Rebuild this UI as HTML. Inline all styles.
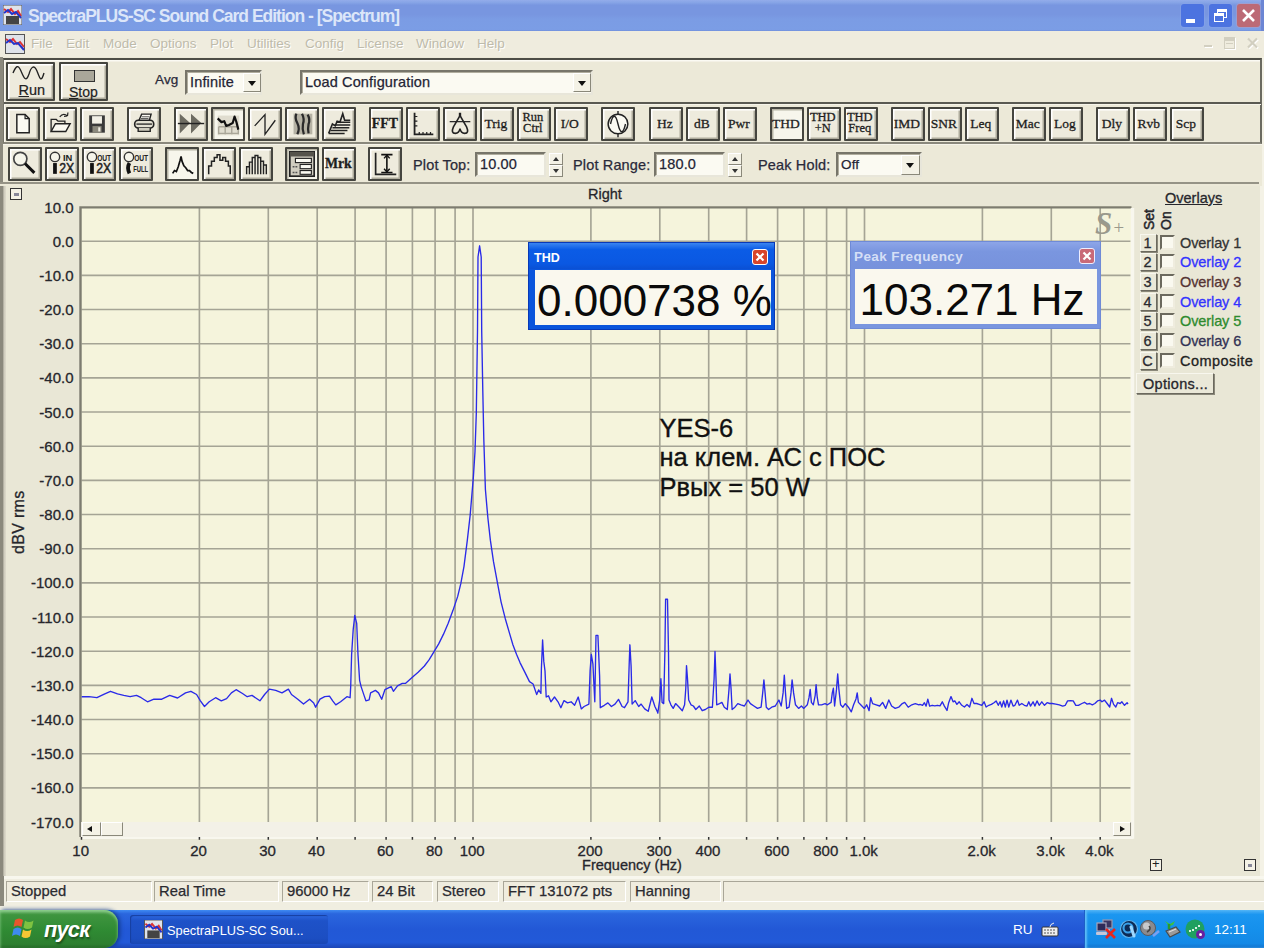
<!DOCTYPE html><html><head><meta charset="utf-8"><title>SpectraPLUS-SC Sound Card Edition - [Spectrum]</title><style>
*{box-sizing:border-box;margin:0;padding:0}
html,body{width:1264px;height:948px;overflow:hidden;background:#ECE9D8}
body{position:relative;font-family:"Liberation Sans",sans-serif;color:#222;font-size:14px}
.abs{position:absolute}
.t{position:absolute;white-space:nowrap;line-height:1}
#title{left:0;top:0;width:1264px;height:31.5px;background:linear-gradient(#93ACEA 0,#86A4E6 8%,#7896E0 16%,#7896E0 45%,#7B9CE4 60%,#7B9DE5 92%,#6C88D8 100%)}
#title .tt{left:28px;top:7.5px;font-size:17.5px;font-weight:bold;color:#DCE6F9;letter-spacing:-1px;font-family:"Liberation Sans",sans-serif}
#menu{left:0;top:31px;width:1264px;height:26px;background:#EFECDE}
#menu .t{top:6px;font-size:13.5px;color:#BEBBAB;text-shadow:1px 1px 0 #fff}
.btn{position:absolute;width:34px;height:34px;background:#EEEBDD;border:2px solid #45453f;border-radius:1px;box-shadow:inset 1.5px 1.5px 0 #fff,inset -1.5px -1.5px 0 #aeab9c}
.btn.down{background:#F7F6EC;box-shadow:inset 1.5px 1.5px 0 #b8b5a6}
.btn svg{position:absolute;left:0;top:0;width:30px;height:30px}
.btxt{position:absolute;left:-2.7px;top:0;width:34px;height:30px;text-align:center;font-family:"Liberation Serif",serif;font-weight:bold;color:#1e1e1e;-webkit-text-stroke:0.3px #1e1e1e;white-space:nowrap}
.inp{position:absolute;background:#FBFAF2;border:2px solid;border-color:#77756a #e8e6da #e8e6da #77756a;box-shadow:inset 1px 1px 0 #b0ad9e}
.lab{position:absolute;white-space:nowrap;line-height:1;font-size:14.5px;color:#2a2a3a;-webkit-text-stroke:0.25px #2a2a3a;letter-spacing:0.15px}
.sp{position:absolute;background:#F4F2E6;border:1px solid;border-color:#fff #8a887a #8a887a #fff}
.st{position:absolute;top:881px;height:21px;border:1px solid;border-color:#a9a698 #fff #fff #a9a698;font-size:14.8px;line-height:19px;padding-left:4px;color:#2a2a30;-webkit-text-stroke:0.25px #2a2a30;white-space:nowrap;background:#EFECDE}
.ov{position:absolute;left:1180px;font-size:14.5px;line-height:1;white-space:nowrap;-webkit-text-stroke:0.3px}
.ovb{position:absolute;left:1140px;width:17px;height:18px;border:1px solid;border-color:#f8f7ee #6b695e #6b695e #f8f7ee;box-shadow:1px 1px 0 #8a887a;font-size:14.5px;line-height:16px;text-align:center;padding-right:2px;background:#EAE8D8;color:#2a2a30;-webkit-text-stroke:0.3px}
.ovc{position:absolute;left:1160px;width:15px;height:15px;background:#FAF9F0;border:2px solid;border-color:#6b695e #efecde #efecde #6b695e}
.ax{position:absolute;font-size:14.5px;line-height:1;white-space:nowrap;color:#26262c;-webkit-text-stroke:0.3px #26262c}
.pw{position:absolute}
</style></head><body>
<div id="title" class="abs">
<svg class="abs" style="left:3px;top:5px" width="19" height="20" viewBox="0 0 19 20"><rect x="0" y="0" width="19" height="20" fill="#dfe3ea" stroke="#555" stroke-width="1"/><path d="M1 4 L5 7 L8 4 L12 9 L15 6 L18 11" stroke="#d33" stroke-width="2" fill="none"/><path d="M1 8 L5 5 L9 9 L13 7 L18 13" stroke="#23c" stroke-width="2" fill="none"/><rect x="3" y="11" width="13" height="8" fill="#444"/></svg>
<div class="t tt">SpectraPLUS-SC Sound Card Edition - [Spectrum]</div>
<div class="abs" style="left:1180.5px;top:3.5px;width:23.5px;height:23.5px;border-radius:3px;box-shadow:0 0 0 1px #8FA8EE55;background:#4C73E0"></div>
<div class="abs" style="left:1208.7px;top:3.5px;width:23.5px;height:23.5px;border-radius:3px;box-shadow:0 0 0 1px #8FA8EE55;background:#4C73E0"></div>
<div class="abs" style="left:1236.8px;top:3.5px;width:23.5px;height:23.5px;border-radius:3px;box-shadow:0 0 0 1px #D9A0AC55;background:#BC6A76"></div>
<div class="abs" style="left:1186px;top:19px;width:9px;height:3.5px;background:#fff"></div>
<div class="abs" style="left:1217px;top:9px;width:10px;height:9px;border:1.5px solid #fff;border-top-width:3px"></div>
<div class="abs" style="left:1213.500px;top:13px;width:10px;height:9px;border:1.5px solid #fff;border-top-width:3px;background:#4C73E0"></div>
<svg class="abs" style="left:1241px;top:8px" width="15" height="15"><path d="M2 2 L13 13 M13 2 L2 13" stroke="#fff" stroke-width="2.600"/></svg>
<div class="abs" style="left:1261px;top:0;width:3px;height:31px;background:#6C86D4"></div>
</div>
<div id="menu" class="abs">
<svg class="abs" style="left:5px;top:3px" width="20" height="20" viewBox="0 0 20 20"><rect x="0.5" y="0.5" width="19" height="19" fill="#dfe3ea" stroke="#555"/><path d="M1 5 L5 8 L8 5 L12 10 L15 8 L19 13" stroke="#d33" stroke-width="2" fill="none"/><path d="M1 9 L5 6 L9 10 L13 9 L19 16" stroke="#23c" stroke-width="2" fill="none"/></svg>
<div class="t" style="left:31px">File</div>
<div class="t" style="left:66px">Edit</div>
<div class="t" style="left:103px">Mode</div>
<div class="t" style="left:150px">Options</div>
<div class="t" style="left:210px">Plot</div>
<div class="t" style="left:247px">Utilities</div>
<div class="t" style="left:305px">Config</div>
<div class="t" style="left:357px">License</div>
<div class="t" style="left:416px">Window</div>
<div class="t" style="left:477px">Help</div>
<div class="abs" style="left:1204px;top:13.500px;width:8px;height:2.500px;background:#D2CFC0;box-shadow:1px 1px 0 #fff"></div>
<div class="abs" style="left:1224px;top:6px;width:11px;height:11.500px;border:1.500px solid #D2CFC0;border-top-width:4px;box-shadow:1px 1px 0 #fff"></div><div class="abs" style="left:1226px;top:11.500px;width:7px;height:1.500px;background:#D2CFC0"></div>
<svg class="abs" style="left:1246px;top:5px" width="14" height="14"><path d="M3 3.500 L12 12.500 M12 3.500 L3 12.500" stroke="#fff" stroke-width="2.200"/><path d="M2 2.500 L11 11.500 M11 2.500 L2 11.500" stroke="#D2CFC0" stroke-width="2.200"/></svg>
</div>
<div class="abs" style="left:3px;top:58px;width:1259px;height:86px;border-style:solid;border-color:#4d4d46 #6b6a60 #8a887c #77756a;border-width:2.5px 2px 2px 1.5px;box-shadow:inset 1px 1.5px 0 #fbfaf3,0 1px 0 #f6f4ea"></div>
<div class="abs" style="left:4px;top:102.300px;width:1257px;height:1.600px;background:#5a5a52;box-shadow:0 1px 0 #f6f4ea"></div>
<div class="abs" style="left:0;top:57px;width:3px;height:126px;background:#8b897d"></div>
<div class="abs" style="left:0;top:182px;width:1259px;height:2.3px;background:#959386"></div>
<div class="abs" style="left:0;top:186px;width:6px;height:690px;background:linear-gradient(90deg,#8b897d 0,#8b897d 55%,#c9c6b8 60%,#dedbcc 100%)"></div>
<div class="btn" style="left:6px;top:62px;width:49px;height:39px"><svg style="width:45px;height:35px" viewBox="0 0 45 35"><path d="M5 9 C8 2 10 0 13 7 C16 14 18 19 21 10 C23 3 26 0 29 7 C32 15 33 19 36 9" stroke="#222" stroke-width="1.35" fill="none"/></svg><div class="t" style="left:10.5px;top:19px;font-size:14.5px;color:#222;-webkit-text-stroke:0.2px"><u>R</u>un</div></div>
<div class="btn" style="left:59px;top:62px;width:49px;height:39px"><div class="abs" style="left:13px;top:6px;width:21px;height:12px;background:#aaa79a;border:1.5px solid #333"></div><div class="t" style="left:8px;top:21px;font-size:14px;color:#222;-webkit-text-stroke:0.2px"><u>S</u>top</div></div>
<div class="lab" style="left:155px;top:73px;font-size:13.5px">Avg</div>
<div class="inp" style="left:185px;top:69.5px;width:77px;height:25px"></div><div class="lab" style="left:190px;top:75px;color:#223">Infinite</div>
<div class="sp" style="left:243px;top:73px;width:18px;height:19px"></div><div class="abs" style="left:248px;top:81px;border:4px solid transparent;border-top:5px solid #111"></div>
<div class="inp" style="left:300px;top:69.5px;width:293px;height:25px"></div><div class="lab" style="left:305px;top:75px;color:#223">Load Configuration</div>
<div class="sp" style="left:573px;top:73px;width:18px;height:19px"></div><div class="abs" style="left:578px;top:81px;border:4px solid transparent;border-top:5px solid #111"></div>
<div class="btn" style="left:5.5px;top:106.5px;width:34px;height:34px"><svg viewBox="0 0 32 32"><g transform="translate(1.5 1.5) scale(0.88)"><path d="M9 5 H19 L24 10 V27 H9 Z" fill="#fbfaf2" stroke="#222" stroke-width="1.8"/><path d="M19 5 V10 H24" stroke="#222" fill="none" stroke-width="1.5"/></g></svg></div>
<div class="btn" style="left:42.5px;top:106.5px;width:34px;height:34px"><svg viewBox="0 0 32 32"><g transform="translate(1 1) scale(0.92)"><path d="M6 25 V11 H12 L14 13 H22 V16" stroke="#222" fill="none" stroke-width="1.5"/><path d="M6 25 L11 16 H28 L23 25 Z" fill="#fbfaf2" stroke="#222" stroke-width="1.7"/><path d="M16 8 Q20 3 25 7 M25 7 l0.5 -4 M25 7 l-4 0.5" stroke="#222" fill="none" stroke-width="1.4"/></g></svg></div>
<div class="btn" style="left:79.5px;top:106.5px;width:34px;height:34px"><svg viewBox="0 0 32 32"><g transform="translate(1.5 1.5) scale(0.88)"><rect x="7" y="6" width="19" height="21" fill="#3a3a3a"/><rect x="10.500" y="7" width="12" height="9" fill="#f2f0e6"/><rect x="11" y="19" width="11" height="8" fill="#8a887c"/><rect x="18" y="20.500" width="2.500" height="5" fill="#f2f0e6"/></g></svg></div>
<div class="btn" style="left:126.5px;top:106.5px;width:34px;height:34px"><svg viewBox="0 0 32 32"><g transform="translate(1.5 0) scale(0.92)"><path d="M10 13 L13 6 H24 L22 13" fill="#fbfaf2" stroke="#222" stroke-width="1.6"/><path d="M13 9 h9 M12 11 h9" stroke="#444" stroke-width="1"/><rect x="5" y="13" width="22" height="9" rx="4" fill="#e4e1d3" stroke="#222" stroke-width="1.9"/><path d="M7 17.500 H25" stroke="#222" stroke-width="1.5"/><path d="M9 22 V26 H23 V22" fill="#cfccbe" stroke="#222" stroke-width="1.6"/></g></svg></div>
<div class="btn" style="left:173.5px;top:106.5px;width:34px;height:34px"><svg viewBox="0 0 32 32"><path d="M4 5 L15 15 L4 26 Z M16 5 L27 15 L16 26 Z" fill="#6e6c62"/><path d="M2 15.500 H30" stroke="#222" stroke-width="1.5"/></svg></div>
<div class="btn down" style="left:210.5px;top:106.5px;width:34px;height:34px"><svg viewBox="0 0 32 32"><rect x="5" y="7" width="23" height="21" fill="#e0ddcf"/><path d="M6 19 H27 M6 26 H27 M6 19 V27 M13 19 V27 M20 19 V27 M27 19 V27" stroke="#a9a698" stroke-width="1.5" fill="none"/><path d="M5 10 L9 14 L12 13 L14 18 L17 17 L21 15 L23 8 L25 14 L27 22" stroke="#111" stroke-width="2.3" fill="none" stroke-linejoin="round"/></svg></div>
<div class="btn" style="left:247.5px;top:106.5px;width:34px;height:34px"><svg viewBox="0 0 32 32"><path d="M5 18 L16 6 V27 L27 12" stroke="#222" fill="none" stroke-width="1.4"/></svg></div>
<div class="btn" style="left:284.5px;top:106.5px;width:34px;height:34px"><svg viewBox="0 0 32 32"><rect x="7" y="5" width="20" height="22" fill="#b5b2a4"/><path d="M10 5 q-2 5 1 10 q3 6 0 12 M16 5 q3 6 1 11 q-1 6 1 11 M22 6 q3 5 1 10 q-1 5 0 10" stroke="#2a2a2a" stroke-width="2.4" fill="none"/></svg></div>
<div class="btn" style="left:321.5px;top:106.5px;width:34px;height:34px"><svg viewBox="0 0 32 32"><path d="M5 26 H22 M7 23 H25 M9 20 H27 M11 17 H28 M13 14 H28" stroke="#222" stroke-width="1.600"/><path d="M5 26 L9 16 L12 18 L14 13 L17 14 L20 5 L22 12 L28 12" stroke="#222" stroke-width="1.7" fill="none"/></svg></div>
<div class="btn" style="left:368.5px;top:106.5px;width:34px;height:34px"><div class="btxt" style="font-size:13.8px;line-height:30px;font-weight:bold">FFT</div></div>
<div class="btn" style="left:405.5px;top:106.5px;width:34px;height:34px"><svg viewBox="0 0 32 32"><path d="M7 4 V27 H27" stroke="#222" fill="none" stroke-width="1.900"/><path d="M7 8 h3 M7 13 h3 M7 18 h3 M12 27 v-2.500 M16 27 v-2.500 M20 27 v-2.500 M24 27 v-2.500" stroke="#222" stroke-width="1.3"/></svg></div>
<div class="btn" style="left:442.5px;top:106.5px;width:34px;height:34px"><svg viewBox="0 0 32 32"><path d="M5 13.500 H27" stroke="#222" stroke-width="1.3"/><path d="M16 4 L16 8" stroke="#222" stroke-width="2.500"/><path d="M16 7 L9 19 Q6 26 11 26 Q15 26 16 21 Q17 26 21 26 Q26 26 23 19 Z" stroke="#222" fill="none" stroke-width="1.700"/></svg></div>
<div class="btn" style="left:479.5px;top:106.5px;width:34px;height:34px"><div class="btxt" style="font-size:13.5px;line-height:30px;font-weight:normal">Trig</div></div>
<div class="btn" style="left:516.5px;top:106.5px;width:34px;height:34px"><div class="btxt" style="font-size:12.5px;line-height:11.5px;padding-top:3px;font-weight:normal">Run<br>Ctrl</div></div>
<div class="btn" style="left:553.5px;top:106.5px;width:34px;height:34px"><div class="btxt" style="font-size:13.5px;line-height:30px;font-weight:normal">I/O</div></div>
<div class="btn" style="left:600.5px;top:106.5px;width:34px;height:34px"><svg viewBox="0 0 32 32"><circle cx="16" cy="16" r="10.500" fill="#fbfaf2" stroke="#222" stroke-width="1.600"/><path d="M8 16 C10.500 5 13.500 5 16 16 C18.500 27 21.500 27 24 16" stroke="#222" fill="none" stroke-width="1.500"/><path d="M16 2 v4 M16 26 v4" stroke="#222" stroke-width="1.500"/></svg></div>
<div class="btn" style="left:648.5px;top:106.5px;width:34px;height:34px"><div class="btxt" style="font-size:13.5px;line-height:30px;font-weight:normal">Hz</div></div>
<div class="btn" style="left:685.5px;top:106.5px;width:34px;height:34px"><div class="btxt" style="font-size:13.5px;line-height:30px;font-weight:normal">dB</div></div>
<div class="btn" style="left:722.5px;top:106.5px;width:34px;height:34px"><div class="btxt" style="font-size:13.5px;line-height:30px;font-weight:normal">Pwr</div></div>
<div class="btn down" style="left:769.5px;top:106.5px;width:34px;height:34px"><div class="btxt" style="font-size:13.5px;line-height:30px;font-weight:normal">THD</div></div>
<div class="btn" style="left:806.5px;top:106.5px;width:34px;height:34px"><div class="btxt" style="font-size:12.5px;line-height:11.5px;padding-top:3px;font-weight:normal">THD<br>+N</div></div>
<div class="btn" style="left:843.5px;top:106.5px;width:34px;height:34px"><div class="btxt" style="font-size:12.5px;line-height:11.5px;padding-top:3px;font-weight:normal">THD<br>Freq</div></div>
<div class="btn" style="left:890.5px;top:106.5px;width:34px;height:34px"><div class="btxt" style="font-size:13.5px;line-height:30px;font-weight:normal">IMD</div></div>
<div class="btn" style="left:927.5px;top:106.5px;width:34px;height:34px"><div class="btxt" style="font-size:13.5px;line-height:30px;font-weight:normal">SNR</div></div>
<div class="btn" style="left:964.5px;top:106.5px;width:34px;height:34px"><div class="btxt" style="font-size:13.5px;line-height:30px;font-weight:normal">Leq</div></div>
<div class="btn" style="left:1011.5px;top:106.5px;width:34px;height:34px"><div class="btxt" style="font-size:13.5px;line-height:30px;font-weight:normal">Mac</div></div>
<div class="btn" style="left:1048.5px;top:106.5px;width:34px;height:34px"><div class="btxt" style="font-size:13.5px;line-height:30px;font-weight:normal">Log</div></div>
<div class="btn" style="left:1095.5px;top:106.5px;width:34px;height:34px"><div class="btxt" style="font-size:13.5px;line-height:30px;font-weight:normal">Dly</div></div>
<div class="btn" style="left:1132.5px;top:106.5px;width:34px;height:34px"><div class="btxt" style="font-size:13.5px;line-height:30px;font-weight:normal">Rvb</div></div>
<div class="btn" style="left:1169.5px;top:106.5px;width:34px;height:34px"><div class="btxt" style="font-size:13.5px;line-height:30px;font-weight:normal">Scp</div></div>
<div class="btn" style="left:8px;top:147px;width:34px;height:34px"><svg viewBox="0 0 32 32"><g transform="translate(-1 -0.5)"><circle cx="12" cy="11" r="7" fill="#f6f5ea" stroke="#444" stroke-width="1.800"/><path d="M17 16 L27 26" stroke="#111" stroke-width="3.200"/></g></svg></div>
<div class="btn" style="left:45px;top:147px;width:34px;height:34px"><svg viewBox="0 0 32 32"><circle cx="8.500" cy="8.500" r="5" fill="#f6f5ea" stroke="#333" stroke-width="1.500"/><path d="M8.500 15 V26.500" stroke="#111" stroke-width="4"/><text x="17" y="12.500" font-size="9" font-weight="bold" font-family="Liberation Sans, sans-serif" fill="#222" textLength="10" lengthAdjust="spacingAndGlyphs">IN</text><text x="13" y="26" font-size="15" font-weight="normal" font-family="Liberation Sans, sans-serif" fill="#222" stroke="#222" stroke-width="0.5" textLength="16" lengthAdjust="spacingAndGlyphs">2X</text></svg></div>
<div class="btn" style="left:82px;top:147px;width:34px;height:34px"><svg viewBox="0 0 32 32"><circle cx="8.500" cy="8.500" r="5" fill="#f6f5ea" stroke="#333" stroke-width="1.500"/><path d="M8.500 15 V26.500" stroke="#111" stroke-width="4"/><text x="14" y="12.500" font-size="9" font-weight="bold" font-family="Liberation Sans, sans-serif" fill="#222" textLength="15" lengthAdjust="spacingAndGlyphs">OUT</text><text x="13" y="26" font-size="15" font-weight="normal" font-family="Liberation Sans, sans-serif" fill="#222" stroke="#222" stroke-width="0.5" textLength="16" lengthAdjust="spacingAndGlyphs">2X</text></svg></div>
<div class="btn" style="left:119px;top:147px;width:34px;height:34px"><svg viewBox="0 0 32 32"><circle cx="8.500" cy="8.500" r="5" fill="#f6f5ea" stroke="#333" stroke-width="1.500"/><path d="M9 15 Q6 20 9 26" stroke="#111" stroke-width="4" fill="none"/><text x="14" y="12.500" font-size="9" font-weight="bold" font-family="Liberation Sans, sans-serif" fill="#222" textLength="15" lengthAdjust="spacingAndGlyphs">OUT</text><text x="13" y="25" font-size="10" font-weight="bold" font-family="Liberation Sans, sans-serif" fill="#222" stroke="#222" stroke-width="0" textLength="16" lengthAdjust="spacingAndGlyphs">FULL</text></svg></div>
<div class="btn down" style="left:165px;top:147px;width:34px;height:34px"><svg viewBox="0 0 32 32"><path d="M6 26 L8 23 L10 24 L12 19 L14 12 L15 8 L16 13 L18 18 L20 20 L22 23 L24 23 L26 25 L28 26" stroke="#111" stroke-width="1.800" fill="none"/></svg></div>
<div class="btn" style="left:202px;top:147px;width:34px;height:34px"><svg viewBox="0 0 32 32"><path d="M5 27 V18 H8 V13 H11 V9 H14 V6 H17 V12 H20 V9 H23 V13 H26 V18 H28 V27" stroke="#222" fill="none" stroke-width="1.600"/></svg></div>
<div class="btn" style="left:239px;top:147px;width:34px;height:34px"><svg viewBox="0 0 32 32"><path d="M6 27 V19 H9 V27 M9 19 V14 H12 V27 M12 14 V9 H15 V27 M15 9 V7 H18 V27 M18 9 H21 V27 M21 13 H24 V27 M24 17 H27 V27" stroke="#222" fill="none" stroke-width="1.500"/></svg></div>
<div class="btn down" style="left:285px;top:147px;width:34px;height:34px"><svg viewBox="0 0 32 32"><rect x="3" y="3" width="26" height="26" fill="#d0cdc0" stroke="#222" stroke-width="1.800"/><rect x="3" y="3" width="26" height="5" fill="#55534c"/><rect x="9" y="10" width="17" height="4.500" fill="#fbfaf2" stroke="#222" stroke-width="1.200"/><rect x="14" y="16.500" width="12" height="4.500" fill="#fbfaf2" stroke="#222" stroke-width="1.200"/><rect x="14" y="23" width="12" height="4" fill="#fbfaf2" stroke="#222" stroke-width="1.200"/><path d="M6 19 h6 M6 25 h6" stroke="#555" stroke-width="1.500" stroke-dasharray="2 1"/></svg></div>
<div class="btn" style="left:322px;top:147px;width:34px;height:34px"><div class="btxt" style="font-size:13.8px;line-height:30px;font-weight:bold">Mrk</div></div>
<div class="btn" style="left:368px;top:147px;width:34px;height:34px"><svg viewBox="0 0 32 32"><path d="M6 4 V27 H28" stroke="#222" fill="none" stroke-width="1.800"/><path d="M12 6 H24 M12 25 H24 M18 6 V25" stroke="#111" stroke-width="1.700"/><path d="M15 10 L18 6.500 L21 10 M15 21 L18 24.500 L21 21" stroke="#111" stroke-width="1.500" fill="none"/></svg></div>
<div class="lab" style="left:413px;top:158px">Plot Top:</div>
<div class="inp" style="left:475px;top:152px;width:71px;height:25px"></div><div class="lab" style="left:480px;top:157px;color:#223">10.00</div>
<div class="sp" style="left:549px;top:153px;width:14px;height:12px"></div><div class="sp" style="left:549px;top:165px;width:14px;height:12px"></div>
<div class="abs" style="left:553px;top:154px;border:3px solid transparent;border-bottom:4px solid #333"></div><div class="abs" style="left:553px;top:169px;border:3px solid transparent;border-top:4px solid #333"></div>
<div class="lab" style="left:573px;top:158px">Plot Range:</div>
<div class="inp" style="left:654px;top:152px;width:71px;height:25px"></div><div class="lab" style="left:659px;top:157px;color:#223">180.0</div>
<div class="sp" style="left:728px;top:153px;width:14px;height:12px"></div><div class="sp" style="left:728px;top:165px;width:14px;height:12px"></div>
<div class="abs" style="left:732px;top:154px;border:3px solid transparent;border-bottom:4px solid #333"></div><div class="abs" style="left:732px;top:169px;border:3px solid transparent;border-top:4px solid #333"></div>
<div class="lab" style="left:758px;top:158px">Peak Hold:</div>
<div class="inp" style="left:836px;top:152px;width:86px;height:25px"></div><div class="lab" style="left:841px;top:158px;color:#223;font-size:13.5px">Off</div>
<div class="sp" style="left:901px;top:155px;width:19px;height:20px"></div><div class="abs" style="left:906px;top:163px;border:4px solid transparent;border-top:5px solid #111"></div>
<div class="abs" style="left:6px;top:186px;width:1254px;height:690px;background:#E9E7D6"></div>
<div class="abs" style="left:10px;top:188px;width:12px;height:12px;border:1.3px solid #333;background:#f4f2e6"></div><div class="abs" style="left:13.5px;top:192.5px;width:5px;height:3px;background:#889"></div>
<div class="ax" style="left:588px;top:187px">Right</div>
<div class="ax" style="left:1165px;top:191px;text-decoration:underline">Overlays</div>
<div class="abs" style="left:1260px;top:186px;width:4px;height:690px;background:#F4F2E6"></div>
<div class="abs" style="left:1262px;top:57px;width:2px;height:130px;background:#F4F2E6"></div>
<svg class="abs" style="left:0;top:0" width="1264" height="948" viewBox="0 0 1264 948"><rect x="80.5" y="206.0" width="1051.0" height="616.0" fill="#F5F4DC"/><path d="M199.4 207.0 V822.0 M268.3 207.0 V822.0 M317.2 207.0 V822.0 M355.1 207.0 V822.0 M386.1 207.0 V822.0 M412.4 207.0 V822.0 M435.1 207.0 V822.0 M455.1 207.0 V822.0 M473.0 207.0 V822.0 M590.9 207.0 V822.0 M659.8 207.0 V822.0 M708.7 207.0 V822.0 M746.6 207.0 V822.0 M777.6 207.0 V822.0 M803.9 207.0 V822.0 M826.6 207.0 V822.0 M846.6 207.0 V822.0 M864.5 207.0 V822.0 M982.4 207.0 V822.0 M1051.3 207.0 V822.0 M1100.2 207.0 V822.0 M81.5 241.2 H1130.5 M81.5 275.3 H1130.5 M81.5 309.5 H1130.5 M81.5 343.7 H1130.5 M81.5 377.8 H1130.5 M81.5 412.0 H1130.5 M81.5 446.2 H1130.5 M81.5 480.3 H1130.5 M81.5 514.5 H1130.5 M81.5 548.7 H1130.5 M81.5 582.8 H1130.5 M81.5 617.0 H1130.5 M81.5 651.2 H1130.5 M81.5 685.3 H1130.5 M81.5 719.5 H1130.5 M81.5 753.7 H1130.5 M81.5 787.8 H1130.5" stroke="#A5A495" stroke-width="1.65" fill="none"/><path d="M80.5 837.0 V207.4 H1131.5" stroke="#7d7c70" stroke-width="2.4" fill="none"/><path d="M1132.5 208.0 V838.5" stroke="#f8f7ee" stroke-width="3.4" fill="none"/><path d="M1133.5 838.0 H81.5" stroke="#f8f7ee" stroke-width="2" fill="none"/><path d="M81.7 696.7 L89.0 696.7 L96.9 697.7 L104.8 693.9 L110.5 691.3 L117.5 693.9 L123.8 695.4 L130.1 696.7 L136.5 695.4 L141.2 697.7 L147.5 701.8 L153.9 699.2 L161.8 699.2 L169.7 695.4 L177.6 698.0 L185.5 692.9 L190.9 691.3 L196.6 694.5 L200.4 700.8 L204.5 706.5 L209.2 701.8 L215.6 697.7 L221.3 700.8 L226.6 698.6 L231.4 692.9 L236.1 689.7 L242.5 693.5 L247.2 696.7 L252.0 695.4 L259.9 700.8 L264.6 694.5 L269.4 689.1 L275.7 690.4 L282.0 692.9 L288.4 689.1 L291.5 694.5 L297.8 699.2 L303.5 704.0 L309.6 699.2 L313.7 703.0 L315.6 707.2 L320.0 699.2 L324.7 696.7 L329.5 696.1 L332.7 700.8 L335.8 704.9 L340.6 701.8 L346.9 696.7 L350.1 697.7 L350.7 686.6 L351.6 654.9 L353.2 629.6 L354.8 615.4 L356.7 623.3 L358.0 654.9 L359.6 680.3 L361.1 686.6 L364.3 696.1 L365.9 700.8 L369.1 699.9 L370.6 692.9 L375.4 690.4 L378.5 692.9 L381.7 699.2 L384.9 689.7 L388.0 688.2 L391.2 686.6 L393.4 691.3 L397.5 685.9 L402.3 683.4 L405.4 683.4 L411.8 677.7 L418.1 672.3 L424.4 666.0 L429.2 659.7 L433.9 651.8 L438.7 643.9 L443.4 634.4 L448.2 623.3 L452.9 610.6 L457.7 596.4 L460.8 583.7 L464.0 566.3 L467.3 540.3 L470.2 514.8 L473.4 476.8 L475.0 451.5 L476.3 413.5 L477.5 331.0 L478.0 257.0 L479.6 245.8 L481.2 257.0 L481.7 331.0 L482.8 391.0 L483.8 438.9 L485.4 489.5 L487.6 514.8 L488.0 519.0 L490.4 540.4 L493.5 561.7 L497.5 583.1 L501.1 602.1 L505.3 618.7 L509.4 632.9 L512.9 644.8 L516.5 654.3 L520.0 662.6 L524.8 672.1 L529.5 681.6 L533.1 684.0 L536.7 694.6 L538.6 689.9 L540.9 693.4 L541.4 668.5 L542.6 640.0 L543.8 661.4 L545.0 670.9 L546.2 697.0 L548.5 695.8 L550.9 701.8 L554.5 697.0 L558.0 701.8 L560.9 707.7 L564.0 700.6 L567.5 702.9 L571.1 701.8 L574.6 705.3 L578.2 697.0 L581.3 708.9 L584.1 706.5 L588.9 704.1 L590.1 670.9 L591.3 654.3 L592.9 663.8 L594.8 701.8 L596.0 635.3 L597.9 635.3 L599.6 675.6 L600.3 707.7 L604.3 705.3 L607.9 702.9 L611.4 706.5 L615.0 704.1 L618.5 699.4 L622.1 706.5 L624.5 707.7 L628.0 701.8 L629.2 663.8 L629.9 644.8 L631.1 666.2 L632.1 704.1 L635.2 700.6 L638.7 706.5 L641.1 704.1 L644.7 708.9 L648.2 711.3 L651.8 697.0 L654.9 706.5 L657.7 712.4 L657.8 713.1 L659.7 700.0 L660.9 678.7 L662.1 702.4 L663.7 703.6 L664.9 651.4 L665.6 599.2 L667.5 599.2 L668.5 651.4 L669.0 700.0 L670.9 704.8 L673.2 708.4 L675.6 703.6 L679.2 707.2 L682.3 710.7 L684.6 704.8 L685.8 688.2 L686.5 665.6 L687.5 678.7 L688.7 700.0 L691.0 704.8 L693.4 706.0 L695.8 709.5 L699.3 706.0 L702.2 710.7 L705.3 709.5 L708.8 707.2 L712.4 707.2 L714.1 678.7 L715.0 651.4 L716.0 678.7 L716.7 704.8 L719.5 703.6 L721.9 702.4 L724.3 707.2 L727.3 709.5 L729.0 689.4 L730.0 673.9 L731.1 689.4 L732.1 709.5 L734.9 707.2 L737.8 703.6 L740.9 704.8 L744.4 706.0 L748.0 700.0 L750.4 703.6 L753.9 706.0 L757.5 708.4 L761.1 707.2 L762.7 692.9 L763.9 679.9 L765.1 692.9 L766.3 707.2 L768.6 709.5 L771.7 707.2 L775.3 706.0 L778.9 700.0 L781.2 706.0 L783.1 692.9 L784.3 675.1 L785.5 692.9 L786.7 708.4 L789.1 707.2 L791.0 692.9 L792.1 679.9 L793.6 692.9 L795.5 704.8 L798.6 708.4 L801.4 706.0 L803.8 708.4 L807.3 704.8 L809.0 697.7 L810.2 689.4 L811.4 702.4 L813.3 704.8 L815.2 695.3 L816.1 684.6 L817.3 697.7 L818.5 704.8 L821.6 704.8 L825.1 703.6 L827.5 704.8 L831.1 702.4 L832.3 692.9 L833.4 688.2 L834.6 706.0 L836.5 689.4 L837.7 673.9 L838.9 689.4 L840.6 704.8 L842.9 707.2 L845.3 703.6 L848.4 707.2 L851.3 711.9 L853.6 704.8 L856.0 698.9 L857.2 692.9 L858.4 702.4 L860.7 704.8 L864.3 708.4 L866.7 704.8 L869.1 710.7 L870.7 697.7 L872.6 703.6 L876.2 704.8 L879.7 706.0 L882.6 702.4 L885.7 708.4 L888.8 700.0 L891.6 706.0 L895.2 708.4 L898.7 707.2 L902.3 703.6 L904.7 702.4 L908.2 707.2 L911.8 704.8 L915.3 703.6 L918.9 704.8 L920.0 704.4 L922.6 705.3 L924.4 702.7 L926.1 706.1 L927.8 699.2 L929.6 706.1 L932.2 705.3 L934.8 705.8 L937.4 705.3 L940.0 705.8 L942.3 701.8 L944.4 706.1 L947.0 710.5 L948.7 702.7 L951.0 696.6 L953.1 701.8 L954.8 700.9 L956.9 704.4 L959.2 701.8 L961.8 705.3 L964.4 707.0 L967.0 704.4 L969.6 707.0 L971.9 698.3 L974.0 703.5 L976.6 703.5 L979.2 704.4 L981.8 705.3 L984.1 701.8 L986.1 707.0 L988.8 705.3 L991.4 704.4 L994.0 702.7 L996.1 700.9 L998.3 705.3 L1000.1 701.8 L1001.8 707.0 L1003.6 700.9 L1005.3 707.0 L1007.0 700.1 L1008.8 707.0 L1010.9 700.1 L1013.1 706.1 L1014.9 705.3 L1017.5 700.1 L1019.2 705.3 L1021.8 703.5 L1024.4 705.3 L1027.0 706.1 L1028.8 701.8 L1030.5 706.1 L1033.1 701.8 L1034.9 706.1 L1037.0 700.9 L1039.2 705.3 L1041.8 701.8 L1044.5 705.3 L1047.1 702.7 L1049.7 703.5 L1052.3 703.5 L1055.8 704.1 L1059.3 704.8 L1062.7 706.1 L1065.3 705.3 L1067.6 700.9 L1070.6 700.6 L1073.2 700.9 L1075.8 705.3 L1078.4 705.3 L1081.9 703.5 L1084.5 702.3 L1087.1 704.1 L1089.7 703.5 L1092.3 704.8 L1094.9 703.5 L1097.5 700.9 L1100.2 700.1 L1101.9 701.8 L1104.5 700.1 L1107.1 703.5 L1109.7 707.0 L1111.5 698.3 L1113.6 704.4 L1115.8 707.0 L1117.6 702.7 L1120.2 703.5 L1121.9 701.8 L1124.5 705.3 L1127.1 702.7 L1128.0 704.1" stroke="#2A2AE8" stroke-width="1.35" fill="none" stroke-linejoin="round"/><path d="M81.5 836.5 v3.2 M199.4 836.5 v3.2 M268.3 836.5 v3.2 M317.2 836.5 v3.2 M355.1 836.5 v3.2 M386.1 836.5 v3.2 M412.4 836.5 v3.2 M435.1 836.5 v3.2 M455.1 836.5 v3.2 M473.0 836.5 v3.2 M590.9 836.5 v3.2 M659.8 836.5 v3.2 M708.7 836.5 v3.2 M746.6 836.5 v3.2 M777.6 836.5 v3.2 M803.9 836.5 v3.2 M826.6 836.5 v3.2 M846.6 836.5 v3.2 M864.5 836.5 v3.2 M982.4 836.5 v3.2 M1051.3 836.5 v3.2 M1100.2 836.5 v3.2" stroke="#333" stroke-width="1.5"/></svg>
<div class="ax" style="right:1190.5px;top:199.5px;font-size:15px;color:#26262c">10.0</div>
<div class="ax" style="right:1190.5px;top:233.7px;font-size:15px;color:#26262c">0.0</div>
<div class="ax" style="right:1190.5px;top:267.8px;font-size:15px;color:#26262c">-10.0</div>
<div class="ax" style="right:1190.5px;top:302.0px;font-size:15px;color:#26262c">-20.0</div>
<div class="ax" style="right:1190.5px;top:336.2px;font-size:15px;color:#26262c">-30.0</div>
<div class="ax" style="right:1190.5px;top:370.3px;font-size:15px;color:#26262c">-40.0</div>
<div class="ax" style="right:1190.5px;top:404.5px;font-size:15px;color:#26262c">-50.0</div>
<div class="ax" style="right:1190.5px;top:438.7px;font-size:15px;color:#26262c">-60.0</div>
<div class="ax" style="right:1190.5px;top:472.8px;font-size:15px;color:#26262c">-70.0</div>
<div class="ax" style="right:1190.5px;top:507.0px;font-size:15px;color:#26262c">-80.0</div>
<div class="ax" style="right:1190.5px;top:541.2px;font-size:15px;color:#26262c">-90.0</div>
<div class="ax" style="right:1190.5px;top:575.3px;font-size:15px;color:#26262c">-100.0</div>
<div class="ax" style="right:1190.5px;top:609.5px;font-size:15px;color:#26262c">-110.0</div>
<div class="ax" style="right:1190.5px;top:643.7px;font-size:15px;color:#26262c">-120.0</div>
<div class="ax" style="right:1190.5px;top:677.8px;font-size:15px;color:#26262c">-130.0</div>
<div class="ax" style="right:1190.5px;top:712.0px;font-size:15px;color:#26262c">-140.0</div>
<div class="ax" style="right:1190.5px;top:746.2px;font-size:15px;color:#26262c">-150.0</div>
<div class="ax" style="right:1190.5px;top:780.3px;font-size:15px;color:#26262c">-160.0</div>
<div class="ax" style="right:1190.5px;top:814.5px;font-size:15px;color:#26262c">-170.0</div>
<div class="ax" style="left:11px;top:554px;font-size:16px;letter-spacing:0.3px;transform:rotate(-90deg);transform-origin:0 0">dBV rms</div>
<div class="ax" style="left:50.7px;width:60px;text-align:center;top:843px;font-size:15px">10</div>
<div class="ax" style="left:168.6px;width:60px;text-align:center;top:843px;font-size:15px">20</div>
<div class="ax" style="left:237.5px;width:60px;text-align:center;top:843px;font-size:15px">30</div>
<div class="ax" style="left:286.4px;width:60px;text-align:center;top:843px;font-size:15px">40</div>
<div class="ax" style="left:355.3px;width:60px;text-align:center;top:843px;font-size:15px">60</div>
<div class="ax" style="left:404.3px;width:60px;text-align:center;top:843px;font-size:15px">80</div>
<div class="ax" style="left:442.2px;width:60px;text-align:center;top:843px;font-size:15px">100</div>
<div class="ax" style="left:560.1px;width:60px;text-align:center;top:843px;font-size:15px">200</div>
<div class="ax" style="left:629.0px;width:60px;text-align:center;top:843px;font-size:15px">300</div>
<div class="ax" style="left:677.9px;width:60px;text-align:center;top:843px;font-size:15px">400</div>
<div class="ax" style="left:746.8px;width:60px;text-align:center;top:843px;font-size:15px">600</div>
<div class="ax" style="left:795.8px;width:60px;text-align:center;top:843px;font-size:15px">800</div>
<div class="ax" style="left:833.7px;width:60px;text-align:center;top:843px;font-size:15px">1.0k</div>
<div class="ax" style="left:951.6px;width:60px;text-align:center;top:843px;font-size:15px">2.0k</div>
<div class="ax" style="left:1020.5px;width:60px;text-align:center;top:843px;font-size:15px">3.0k</div>
<div class="ax" style="left:1069.4px;width:60px;text-align:center;top:843px;font-size:15px">4.0k</div>
<div class="ax" style="left:572px;width:120px;text-align:center;top:858px">Frequency (Hz)</div>
<div class="abs" style="left:81px;top:822px;width:1051px;height:15px;background:#F3F1E7"></div>
<div class="sp" style="left:82px;top:822px;width:19px;height:14px"></div><div class="abs" style="left:87px;top:826px;border:3px solid transparent;border-right:5px solid #111;border-left:0"></div>
<div class="sp" style="left:101px;top:822px;width:22px;height:14px"></div>
<div class="sp" style="left:1113px;top:822px;width:18px;height:14px"></div><div class="abs" style="left:1120px;top:826px;border:3px solid transparent;border-left:5px solid #111;border-right:0"></div>
<div class="t" style="left:1095px;top:208px;font-family:'Liberation Serif',serif;font-style:italic;font-weight:bold;font-size:31px;color:#9a998c">S<span style="font-size:19px;font-weight:normal">+</span></div>
<div class="abs" style="left:1150px;top:859px;width:12px;height:12px;border:1.5px solid #333;background:#f4f2e6"></div><div class="t" style="left:1152px;top:857px;font-size:13px;color:#222">+</div>
<div class="abs" style="left:1244px;top:859px;width:12px;height:12px;border:1.5px solid #333;background:#f4f2e6"></div><div class="abs" style="left:1248px;top:864px;width:4px;height:3px;background:#889"></div>
<div class="ax" style="left:1142px;top:230px;font-size:15.5px;-webkit-text-stroke:0.5px;transform:rotate(-90deg);transform-origin:0 0;font-size:14px">Set</div>
<div class="ax" style="left:1159px;top:229.500px;font-size:15.5px;-webkit-text-stroke:0.5px;transform:rotate(-90deg);transform-origin:0 0;font-size:14px">On</div>
<div class="ovb" style="top:233.5px">1</div><div class="ovc" style="top:234.5px"></div><div class="ov" style="top:235.5px;color:#333;letter-spacing:-0.1px">Overlay 1</div>
<div class="ovb" style="top:253.2px">2</div><div class="ovc" style="top:254.2px"></div><div class="ov" style="top:255.2px;color:#3333FF;letter-spacing:-0.1px">Overlay 2</div>
<div class="ovb" style="top:272.9px">3</div><div class="ovc" style="top:273.9px"></div><div class="ov" style="top:274.9px;color:#553333;letter-spacing:-0.1px">Overlay 3</div>
<div class="ovb" style="top:292.6px">4</div><div class="ovc" style="top:293.6px"></div><div class="ov" style="top:294.6px;color:#3333FF;letter-spacing:-0.1px">Overlay 4</div>
<div class="ovb" style="top:312.3px">5</div><div class="ovc" style="top:313.3px"></div><div class="ov" style="top:314.3px;color:#2E8B2E;letter-spacing:-0.1px">Overlay 5</div>
<div class="ovb" style="top:332.0px">6</div><div class="ovc" style="top:333.0px"></div><div class="ov" style="top:334.0px;color:#333355;letter-spacing:-0.1px">Overlay 6</div>
<div class="ovb" style="top:351.7px">C</div><div class="ovc" style="top:352.7px"></div><div class="ov" style="top:353.7px;color:#222;letter-spacing:0.45px">Composite</div>
<div class="abs" style="left:1136px;top:373px;width:78px;height:21px;border:1px solid;border-color:#f8f7ee #6b695e #6b695e #f8f7ee;box-shadow:1px 1px 0 #8a887a;background:#EAE8D8"></div><div class="ax" style="left:1143px;top:376.5px;letter-spacing:0.3px">Options...</div>
<div class="abs" style="left:659.5px;top:413.5px;font-size:25.5px;line-height:29.5px;color:#111;-webkit-text-stroke:0.35px #111;white-space:nowrap">YES-6<br>на клем. АС с ПОС<br>Рвых = 50 W</div>
<div class="pw" style="left:528px;top:242px;width:247px;height:87.5px;background:#0B55DC;border:1px solid #0839B8"></div>
<div class="abs" style="left:529px;top:243px;width:245px;height:26px;background:linear-gradient(#3B85F0,#0B5CE6 25%,#0A58E2 80%,#0A50D4)"></div>
<div class="t" style="left:534px;top:252px;font-size:12.5px;font-weight:bold;color:#fff">THD</div>
<div class="abs" style="left:752px;top:249px;width:16px;height:16px;border:1px solid #fff;border-radius:3px;background:#D8452C"></div><svg class="abs" style="left:755px;top:252px" width="10" height="10"><path d="M1.5 1.5 L8.5 8.5 M8.5 1.5 L1.5 8.5" stroke="#fff" stroke-width="2.2"/></svg>
<div class="abs" style="left:534.5px;top:269.5px;width:236px;height:55px;background:#FAF8EE"></div>
<div class="t" style="left:537px;top:279px;font-size:44px;color:#0a0a0a">0.000738 %</div>
<div class="pw" style="left:849.5px;top:240.8px;width:251.5px;height:88px;background:#7A96DF;border:1px solid #6F8AD6"></div>
<div class="abs" style="left:850.5px;top:241.8px;width:249.5px;height:27px;background:linear-gradient(#8DA5E8,#7A96DF 35%,#7792DC)"></div>
<div class="t" style="left:854px;top:250px;font-size:13.5px;letter-spacing:0.4px;font-weight:bold;color:#D5DFF6">Peak Frequency</div>
<div class="abs" style="left:1079px;top:248px;width:16px;height:16px;border:1px solid #eef;border-radius:3px;background:#C96A78"></div><svg class="abs" style="left:1082px;top:251px" width="10" height="10"><path d="M1.5 1.5 L8.5 8.5 M8.5 1.5 L1.5 8.5" stroke="#fff" stroke-width="2.2"/></svg>
<div class="abs" style="left:855px;top:268.5px;width:241.5px;height:55.5px;background:#FAF8EE"></div>
<div class="t" style="left:859.5px;top:278px;font-size:44px;color:#0a0a0a">103.271 Hz</div>
<div class="abs" style="left:0;top:875.5px;width:1264px;height:35px;background:#F0EEE1;border-top:3px solid #F8F7EE"></div>
<div class="st" style="left:6px;width:146px">Stopped</div>
<div class="st" style="left:154px;width:125px">Real Time</div>
<div class="st" style="left:282px;width:87px">96000 Hz</div>
<div class="st" style="left:372px;width:61px">24 Bit</div>
<div class="st" style="left:437px;width:62px">Stereo</div>
<div class="st" style="left:503px;width:123px">FFT 131072 pts</div>
<div class="st" style="left:630px;width:91px">Hanning</div>
<div class="st" style="left:723px;width:560px"></div>
<div class="abs" style="left:0;top:876px;width:3.5px;height:30px;background:#8b897d"></div>
<div class="abs" style="left:0;top:910px;width:1264px;height:38px;background:linear-gradient(#3F8BF2 0,#2A66DE 10%,#2258D6 50%,#2259D8 85%,#1C46B6 100%)"></div>
<div class="abs" style="left:0;top:910px;width:118px;height:38px;border-radius:0 14px 14px 0;background:linear-gradient(#5FA85F 0,#3F953F 12%,#2F8A33 55%,#2D7F30 90%,#256B28 100%);box-shadow:inset 0 2px 3px #8fd08f,2px 0 4px #123a8a"></div>
<svg class="abs" style="left:12px;top:916px" width="24" height="24" viewBox="0 0 24 24"><path d="M3 4 q4 -3 8 0 l-1.5 7 q-4 -3 -8 0z" fill="#E8562C"/><path d="M13 4.5 q4 3 8.5 0 l-1.5 7 q-4.500 3 -8.500 0z" fill="#7FC241"/><path d="M1.500 13 q4 -3 8 0 l-1.500 7 q-4 -3 -8 0z" fill="#3E8BEF"/><path d="M11 13.500 q4 3 8.500 0 l-1.500 7 q-4.500 3 -8.500 0z" fill="#F6C634"/></svg>
<div class="t" style="left:44px;top:919px;letter-spacing:-0.8px;font-size:21.8px;font-weight:bold;font-style:italic;color:#fff;text-shadow:1px 2px 2px #1d4d1d">пуск</div>
<div class="abs" style="left:130px;top:915px;width:198px;height:29px;border-radius:3px;background:linear-gradient(#2E68E0,#1E52C8 20%,#1C4EC2 80%,#1947B4);box-shadow:inset 1px 1px 1px #173f9f"></div>
<svg class="abs" style="left:144px;top:920px" width="19" height="19" viewBox="0 0 19 20"><rect x="0" y="0" width="19" height="20" fill="#dfe3ea" stroke="#555" stroke-width="1"/><path d="M1 4 L5 7 L8 4 L12 9 L15 6 L18 11" stroke="#d33" stroke-width="2" fill="none"/><path d="M1 8 L5 5 L9 9 L13 7 L18 13" stroke="#23c" stroke-width="2" fill="none"/><rect x="3" y="11" width="13" height="8" fill="#444"/></svg>
<div class="t" style="left:167px;top:924.5px;font-size:12.8px;color:#fff">SpectraPLUS-SC Sou...</div>
<div class="t" style="left:1013px;top:923px;font-size:13.5px;color:#fff">RU</div>
<svg class="abs" style="left:1041px;top:922px" width="18" height="16"><rect x="1" y="5" width="16" height="9" rx="1" fill="#eee" stroke="#333"/><path d="M3 8 h12 M3 11 h12" stroke="#555" stroke-dasharray="2 1"/><path d="M9 5 q0 -3 4 -4" stroke="#eee" fill="none"/></svg>
<div class="abs" style="left:1084px;top:910px;width:180px;height:38px;background:linear-gradient(#4FB2F6 0,#1B96F0 12%,#1590EC 50%,#1489E6 88%,#1272CC 100%);border-left:1px solid #1d5fc6;box-shadow:inset 2px 0 2px #5cbcf8"></div>
<svg class="abs" style="left:1084px;top:909px" width="180" height="39" viewBox="1084 909 180 39"><rect x="1103" y="920" width="9" height="8" fill="#3a3560" stroke="#9a98b0" stroke-width="1.2"/><rect x="1105" y="929" width="5" height="2" fill="#b8b6c8"/><rect x="1097" y="923" width="9" height="8" fill="#2e2a58" stroke="#a8a6bc" stroke-width="1.2"/><rect x="1096" y="932" width="11" height="3" rx="1" fill="#c8c6d8"/><path d="M1106 929 L1115 938 M1115 929 L1106 938" stroke="#E8261C" stroke-width="2.6"/><circle cx="1129" cy="929" r="8.500" fill="#0d2a55" stroke="#5fb4ee" stroke-width="1.2"/><circle cx="1128" cy="928" r="4.500" fill="none" stroke="#3aa0e8" stroke-width="2.2"/><path d="M1131 927 L1134 936" stroke="#9fd8ff" stroke-width="3" stroke-linecap="round"/><circle cx="1148" cy="928" r="7.500" fill="#8a8a8e" stroke="#5a5a60" stroke-width="1"/><circle cx="1146.500" cy="926" r="3.500" fill="#c9c9cc"/><path d="M1149 926 q3 3 -2 6" stroke="#444" stroke-width="1.500" fill="none"/><path d="M1153 936 L1159 931" stroke="#7aa0f0" stroke-width="2.500"/><path d="M1165 921 l5 3 l5 -3 l-2 4 l-4 1 z" fill="#3cc23c"/><path d="M1169 924 v5" stroke="#2a9a2a" stroke-width="2.500"/><path d="M1166 931 L1176 927 L1180 932 L1170 937 Z" fill="#9a9a9a" stroke="#4a4a4a" stroke-width="1.2"/><path d="M1169 932 l7 -3" stroke="#ddd" stroke-width="1.2"/><circle cx="1195" cy="929" r="9.500" fill="#1FA060"/><path d="M1189 931 h2 M1192 930 h2 M1195 928 h2 M1198 926 h2" stroke="#d8f0e0" stroke-width="2"/><circle cx="1200.500" cy="934.500" r="4.500" fill="#6A1FA0"/><circle cx="1200.500" cy="934.500" r="1.500" fill="#fff"/></svg>
<div class="t" style="left:1214px;top:923px;font-size:13.5px;color:#fff">12:11</div>
</body></html>
